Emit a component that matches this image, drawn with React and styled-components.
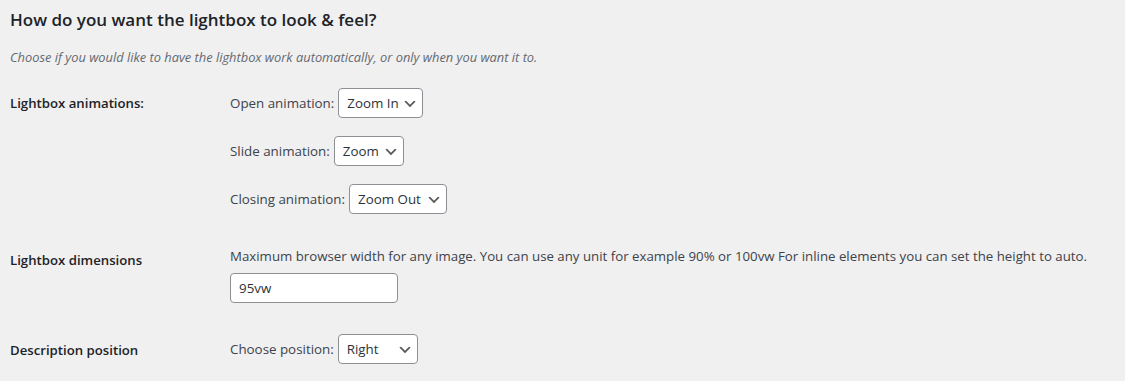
import React from "react";
import styled, { createGlobalStyle } from "styled-components";

const Global = createGlobalStyle`
  html, body { margin: 0; padding: 0; }
  body {
    background: #f0f0f1;
    font-family: "Open Sans", "Liberation Sans", sans-serif;
    color: #3c434a;
    font-size: 13px;
  }
`;

const Page = styled.div`
  padding: 9px 10px 0;
`;

const Title = styled.h2`
  margin: 0;
  font-size: 17px;
  line-height: 22px;
  font-weight: 600;
  color: #1d2327;
`;

const Intro = styled.p`
  margin: 16px 0 0;
  font-size: 12.85px;
  line-height: 20px;
  font-style: italic;
  color: #646970;
`;

const Table = styled.div`
  margin-top: 7px;
  display: flex;
  flex-direction: column;
`;

const Row = styled.div`
  display: grid;
  grid-template-columns: 220px 1fr;
`;

const Head = styled.div`
  padding-top: ${(p) => p.$top}px;
  font-size: 13.2px;
  line-height: 18px;
  font-weight: 600;
  color: #1d2327;
`;

const Cell = styled.div`
  padding: ${(p) => p.$top}px 10px ${(p) => p.$bottom}px 0;
  font-size: 13.35px;
  line-height: 18px;
  display: flex;
  flex-direction: column;
  align-items: flex-start;
  gap: ${(p) => p.$gap || 0}px;
`;

const Field = styled.label`
  display: inline-flex;
  align-items: center;
  gap: 4px;
  color: #3c434a;
`;

const SelectWrap = styled.span`
  position: relative;
  display: inline-flex;
`;

const Select = styled.select`
  appearance: none;
  -webkit-appearance: none;
  box-sizing: border-box;
  width: ${(p) => p.$w}px;
  height: 30px;
  margin: 0;
  padding: 0 20px 0 8px;
  border: 1px solid #8c8f94;
  border-radius: 4px;
  background: #fff;
  color: #2c3338;
  font-family: inherit;
  font-size: 13.35px;
  line-height: 28px;
`;

const Chevron = styled.svg`
  position: absolute;
  right: 5px;
  top: 8px;
  width: 16px;
  height: 16px;
  pointer-events: none;
`;

const Help = styled.div`
  color: #3c434a;
  font-size: 13.28px;
  margin-bottom: 8px;
  white-space: nowrap;
`;

const TextInput = styled.input`
  box-sizing: border-box;
  width: 168px;
  height: 30px;
  margin: 0;
  padding: 0 8px;
  border: 1px solid #8c8f94;
  border-radius: 4px;
  background: #fff;
  color: #2c3338;
  font-family: inherit;
  font-size: 13.35px;
`;

function Dropdown({ value, options, w }) {
  return (
    <SelectWrap>
      <Select $w={w} defaultValue={value}>
        {options.map((o) => (
          <option key={o}>{o}</option>
        ))}
      </Select>
      <Chevron viewBox="0 0 20 20" aria-hidden="true">
        <path d="M5 6l5 5 5-5 2 1-7 7-7-7 2-1z" fill="#555" />
      </Chevron>
    </SelectWrap>
  );
}

export default function App() {
  return (
    <>
      <Global />
      <Page>
        <Title>How do you want the lightbox to look &amp; feel?</Title>
        <Intro>
          Choose if you would like to have the lightbox work automatically, or only when you want it to.
        </Intro>
        <Table>
          <Row>
            <Head $top={20}>Lightbox animations:</Head>
            <Cell $top={14} $bottom={15} $gap={18}>
              <Field>
                Open animation:
                <Dropdown w={85} value="Zoom In" options={["Zoom In", "Fade", "None"]} />
              </Field>
              <Field>
                Slide animation:
                <Dropdown w={70} value="Zoom" options={["Zoom", "Slide", "Fade"]} />
              </Field>
              <Field>
                Closing animation:
                <Dropdown w={98} value="Zoom Out" options={["Zoom Out", "Fade", "None"]} />
              </Field>
            </Cell>
          </Row>
          <Row>
            <Head $top={22}>Lightbox dimensions</Head>
            <Cell $top={18} $bottom={14}>
              <Help>
                Maximum browser width for any image. You can use any unit for example 90% or 100vw For inline elements you can set the height to auto.
              </Help>
              <TextInput defaultValue="95vw" />
            </Cell>
          </Row>
          <Row>
            <Head $top={24}>Description position</Head>
            <Cell $top={17} $bottom={15}>
              <Field>
                Choose position:
                <Dropdown w={80} value="Right" options={["Right", "Left", "Top", "Bottom"]} />
              </Field>
            </Cell>
          </Row>
        </Table>
      </Page>
    </>
  );
}
